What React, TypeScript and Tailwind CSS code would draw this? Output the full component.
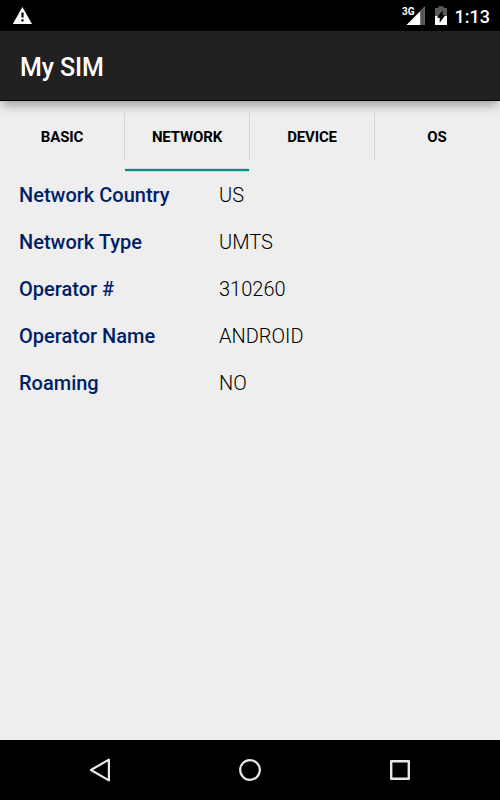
const tabs = ["BASIC", "NETWORK", "DEVICE", "OS"];

const rows = [
  { label: "Network Country", value: "US" },
  { label: "Network Type", value: "UMTS" },
  { label: "Operator #", value: "310260" },
  { label: "Operator Name", value: "ANDROID" },
  { label: "Roaming", value: "NO" },
];

function StatusBar() {
  return (
    <div className="flex h-[31px] shrink-0 items-center bg-black pr-[10px] pl-3 text-white">
      <svg className="h-[31px] w-5" viewBox="12 0 20 31">
        <path d="M22.4 7 32 24H12.8Z" fill="#fff" />
        <path d="M21.4 12.5h2.2v5h-2.2zM21.4 19.2h2.2v2.2h-2.2z" fill="#000" />
      </svg>
      <div className="ml-auto flex items-center">
        <span className="mr-[-9px] mb-[7px] text-[10px] leading-none font-bold">3G</span>
        <svg className="h-[31px] w-[19px]" viewBox="406 0 19 31">
          <path d="M406.5 25 424.9 6.6V25Z" fill="#fff" />
          <path d="M420.2 11.3 424.9 6.6V25h-4.7Z" fill="#555" />
        </svg>
        <svg className="ml-[9px] h-[31px] w-[14px]" viewBox="434 0 14 31">
          <path d="M435 8h3.3V6.2h5.4V8h3.3v8h-12Z" fill="#5a5a5a" />
          <path d="M435 16h12v9h-12Z" fill="#fff" />
          <path d="M442.7 10.2v5h2.5l-5.5 7.6v-5h-2.9Z" fill="#000" />
        </svg>
        <span className="ml-[7px] pt-[2px] text-[18px] leading-none font-medium">1:13</span>
      </div>
    </div>
  );
}

function Tabs({ active }: { active: string }) {
  return (
    <div className="grid h-[70px] shrink-0 grid-cols-4">
      {tabs.map((tab, i) => (
        <div key={tab} className="flex flex-col">
          <div className={`mt-[10px] flex h-[50px] items-center justify-center border-r pt-[2px] text-[15px] font-bold tracking-[-0.01em] text-black ${i < tabs.length - 1 ? "border-[#d6d6d6]" : "border-transparent"}`}>
            {tab}
          </div>
          {tab === active && <div className="mt-auto mr-px -mb-px h-[4px] border-y border-[#d4dad9] bg-[#008f7d]" />}
        </div>
      ))}
    </div>
  );
}

function NavBar() {
  return (
    <div className="flex h-[60px] shrink-0 items-center justify-between bg-black px-[88px]">
      <svg className="size-6" viewBox="0 0 24 24" fill="none" stroke="#e8e8e8" strokeWidth="2.2" strokeLinejoin="round">
        <path d="M2.9 12 20.9 1.6v20.8Z" />
      </svg>
      <svg className="size-6" viewBox="0 0 24 24" fill="none" stroke="#e8e8e8" strokeWidth="2.2">
        <circle cx="12" cy="12" r="9.8" />
      </svg>
      <svg className="size-6" viewBox="0 0 24 24" fill="none" stroke="#e8e8e8" strokeWidth="2.4" strokeLinejoin="round">
        <path d="M3.2 3.2h17.6v17.6H3.2Z" />
      </svg>
    </div>
  );
}

export default function App() {
  return (
    <div className="flex h-[800px] w-[500px] flex-col overflow-hidden bg-[#eee] font-['Roboto',sans-serif]">
      <StatusBar />
      <header className="flex h-[70px] shrink-0 items-center border-b border-black bg-[#212121] px-5 pt-[5px] text-[25px] font-medium tracking-[-0.005em] text-white shadow-[0_6px_10px_-2px_rgba(0,0,0,0.35)]">
        My SIM
      </header>
      <Tabs active="NETWORK" />
      <dl className="flex-1 pt-px">
        {rows.map((row) => (
          <div key={row.label} className="flex h-[47px] items-center pb-px pl-[19px] text-[20px]">
            <dt className="w-[200px] font-medium text-[#001f66]">{row.label}</dt>
            <dd className="font-light text-black">{row.value}</dd>
          </div>
        ))}
      </dl>
      <NavBar />
    </div>
  );
}
